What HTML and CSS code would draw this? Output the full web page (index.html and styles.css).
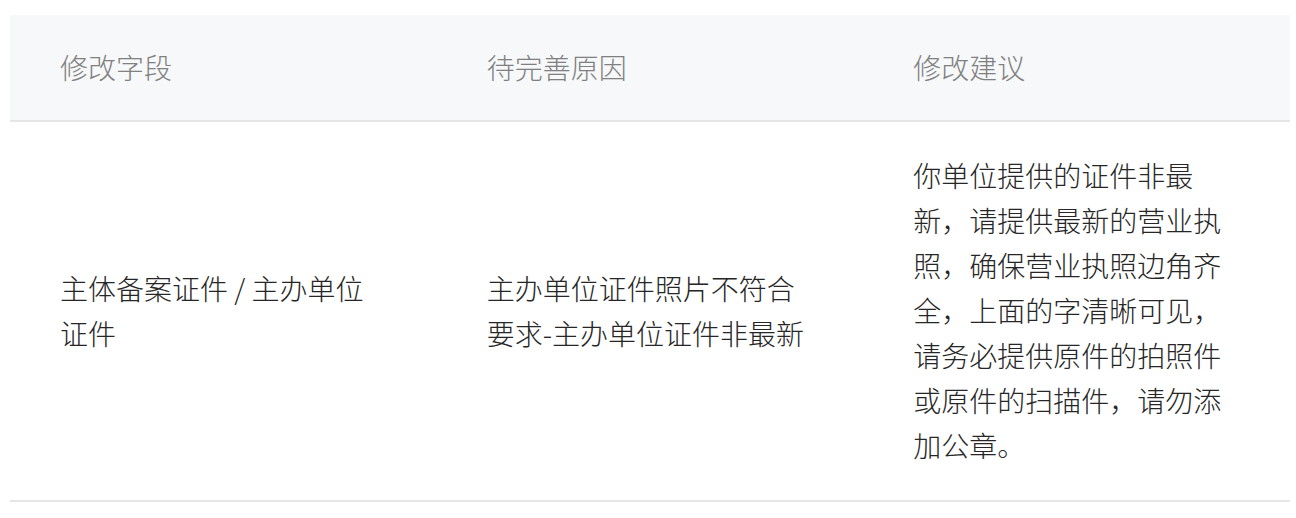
FILE: index.html
```html
<!DOCTYPE html>
<html lang="zh-CN">
<head>
<meta charset="utf-8">
<title>修改字段</title>
<link rel="stylesheet" href="styles.css">
</head>
<body>
<div class="page">
  <table class="fix-table">
    <colgroup>
      <col class="col">
      <col class="col">
      <col class="col">
    </colgroup>
    <thead>
      <tr>
        <th>修改字段</th>
        <th>待完善原因</th>
        <th>修改建议</th>
      </tr>
    </thead>
    <tbody>
      <tr>
        <td>主体备案证件 / 主办单位证件</td>
        <td>主办单位证件照片不符合要求-主办单位证件非最新</td>
        <td>你单位提供的证件非最新，请提供最新的营业执照，确保营业执照边角齐全，上面的字清晰可见，请务必提供原件的拍照件或原件的扫描件，请勿添加公章。</td>
      </tr>
    </tbody>
  </table>
  <div class="watermark" aria-hidden="true">
    <span>zQpo7NHD3</span><span>zQpo7NHD3</span><span>zQpo7NHD3</span><span>zQpo7NHD3</span>
    <span>zQpo7NHD3</span><span>zQpo7NHD3</span><span>zQpo7NHD3</span><span>zQpo7NHD3</span>
    <span>zQpo7NHD3</span><span>zQpo7NHD3</span><span>zQpo7NHD3</span><span>zQpo7NHD3</span>
    <span>zQpo7NHD3</span><span>zQpo7NHD3</span><span>zQpo7NHD3</span><span>zQpo7NHD3</span>
    <span>zQpo7NHD3</span><span>zQpo7NHD3</span><span>zQpo7NHD3</span><span>zQpo7NHD3</span>
    <span>zQpo7NHD3</span><span>zQpo7NHD3</span><span>zQpo7NHD3</span><span>zQpo7NHD3</span>
  </div>
</div>
</body>
</html>
```
FILE: styles.css
```css
html, body {
  margin: 0;
  padding: 0;
  background: #ffffff;
}

body {
  font-family: "Noto Sans CJK SC", "Noto Sans", sans-serif;
  color: #333333;
}

.page {
  position: relative;
  padding: 15px 6px 0 10px;
  overflow: hidden;
  height: 503px;
}

.fix-table {
  width: 1280px;
  border-collapse: collapse;
  table-layout: fixed;
  font-size: 28px;
  line-height: 45px;
  font-weight: 300;
}

.fix-table th,
.fix-table td {
  padding: 30px 50px;
  text-align: left;
  vertical-align: middle;
}

.fix-table th {
  background: #f7f8fa;
  color: #808080;
  font-weight: 300;
  border-bottom: 2px solid #e6e6e6;
}

.fix-table td {
  color: #262626;
  padding: 31px 50px 32px;
  border-bottom: 2px solid #e6e6e6;
}

.watermark {
  position: absolute;
  left: 173px;
  top: 38px;
  display: grid;
  grid-template-columns: repeat(4, 352px);
  row-gap: 67px;
  pointer-events: none;
  font-family: "Noto Sans", sans-serif;
  font-size: 22px;
  line-height: 25px;
  color: rgba(0, 0, 0, 0.025);
}
```
